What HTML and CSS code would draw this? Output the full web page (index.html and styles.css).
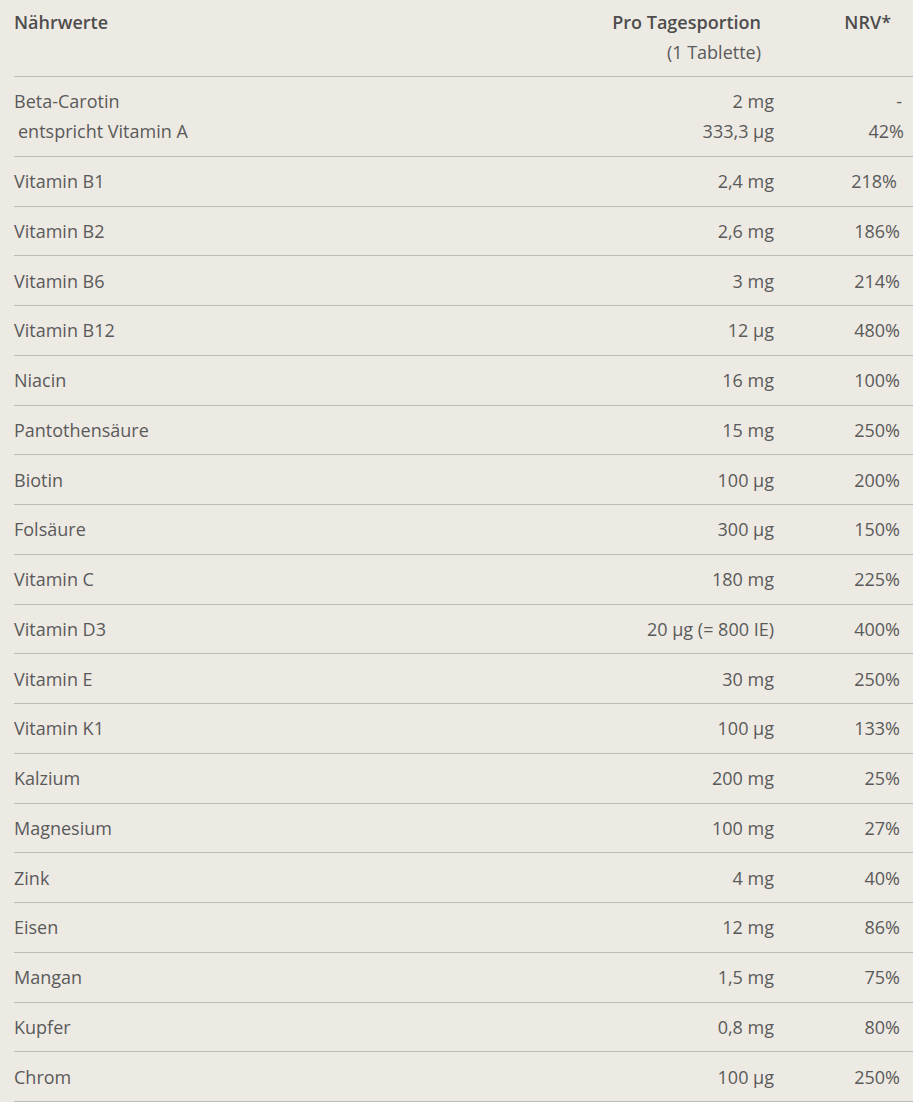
FILE: index.html
```html
<!DOCTYPE html>
<html lang="de">
<head>
<meta charset="utf-8">
<link rel="stylesheet" href="styles.css">
</head>
<body>
<div class="table">
  <div class="row head">
    <div class="c1">Nährwerte</div>
    <div class="c2">Pro Tagesportion<br><span class="sub">(1 Tablette)</span></div>
    <div class="c3">NRV*</div>
  </div>
  <div class="row">
    <div class="c1">Beta-Carotin<br><span class="indent">entspricht Vitamin A</span></div>
    <div class="c2">2 mg<br>333,3 µg</div>
    <div class="c3"><span class="dash">-</span><br><span class="r42">42%</span></div>
  </div>
  <div class="row"><div class="c1">Vitamin B1</div><div class="c2">2,4 mg</div><div class="c3 shift-l">218%</div></div>
  <div class="row"><div class="c1">Vitamin B2</div><div class="c2">2,6 mg</div><div class="c3">186%</div></div>
  <div class="row"><div class="c1">Vitamin B6</div><div class="c2">3 mg</div><div class="c3">214%</div></div>
  <div class="row"><div class="c1">Vitamin B12</div><div class="c2">12 µg</div><div class="c3">480%</div></div>
  <div class="row"><div class="c1">Niacin</div><div class="c2">16 mg</div><div class="c3">100%</div></div>
  <div class="row"><div class="c1">Pantothensäure</div><div class="c2">15 mg</div><div class="c3">250%</div></div>
  <div class="row"><div class="c1">Biotin</div><div class="c2">100 µg</div><div class="c3">200%</div></div>
  <div class="row"><div class="c1">Folsäure</div><div class="c2">300 µg</div><div class="c3">150%</div></div>
  <div class="row"><div class="c1">Vitamin C</div><div class="c2">180 mg</div><div class="c3">225%</div></div>
  <div class="row"><div class="c1">Vitamin D3</div><div class="c2">20 µg (= 800 IE)</div><div class="c3">400%</div></div>
  <div class="row"><div class="c1">Vitamin E</div><div class="c2">30 mg</div><div class="c3">250%</div></div>
  <div class="row"><div class="c1">Vitamin K1</div><div class="c2">100 µg</div><div class="c3">133%</div></div>
  <div class="row"><div class="c1">Kalzium</div><div class="c2">200 mg</div><div class="c3">25%</div></div>
  <div class="row"><div class="c1">Magnesium</div><div class="c2">100 mg</div><div class="c3">27%</div></div>
  <div class="row"><div class="c1">Zink</div><div class="c2">4 mg</div><div class="c3">40%</div></div>
  <div class="row"><div class="c1">Eisen</div><div class="c2">12 mg</div><div class="c3">86%</div></div>
  <div class="row"><div class="c1">Mangan</div><div class="c2">1,5 mg</div><div class="c3">75%</div></div>
  <div class="row"><div class="c1">Kupfer</div><div class="c2">0,8 mg</div><div class="c3">80%</div></div>
  <div class="row"><div class="c1">Chrom</div><div class="c2">100 µg</div><div class="c3">250%</div></div>
</div>
</body>
</html>
```
FILE: styles.css
```css
html, body {
  margin: 0;
  padding: 0;
  background: #edeae4;
}
body {
  font-family: "Open Sans", "Noto Sans", sans-serif;
  font-size: 18px;
  color: #5a5a5a;
  padding-left: 14px;
}
.table {
  display: flex;
  flex-direction: column;
}
.row {
  display: grid;
  grid-template-columns: 1fr 200px 139px;
  line-height: 30px;
  padding: 9.39px 0;
  border-bottom: 1px solid #bdbbb7;
}
.row.head {
  padding: 7px 0 9px;
  font-weight: 600;
  color: #4d4d4d;
}
.head .sub {
  font-weight: 400;
  color: #5a5a5a;
}
.c2 {
  text-align: right;
}
.c3 {
  text-align: right;
  padding-right: 13px;
}
.head .c2 {
  padding-right: 13px;
}
.head .c3 {
  padding-right: 22px;
}
.indent {
  padding-left: 4px;
}
.dash {
  margin-right: -2px;
}
.r42 {
  margin-right: -4px;
}
.shift-l {
  padding-right: 16px;
}
```
